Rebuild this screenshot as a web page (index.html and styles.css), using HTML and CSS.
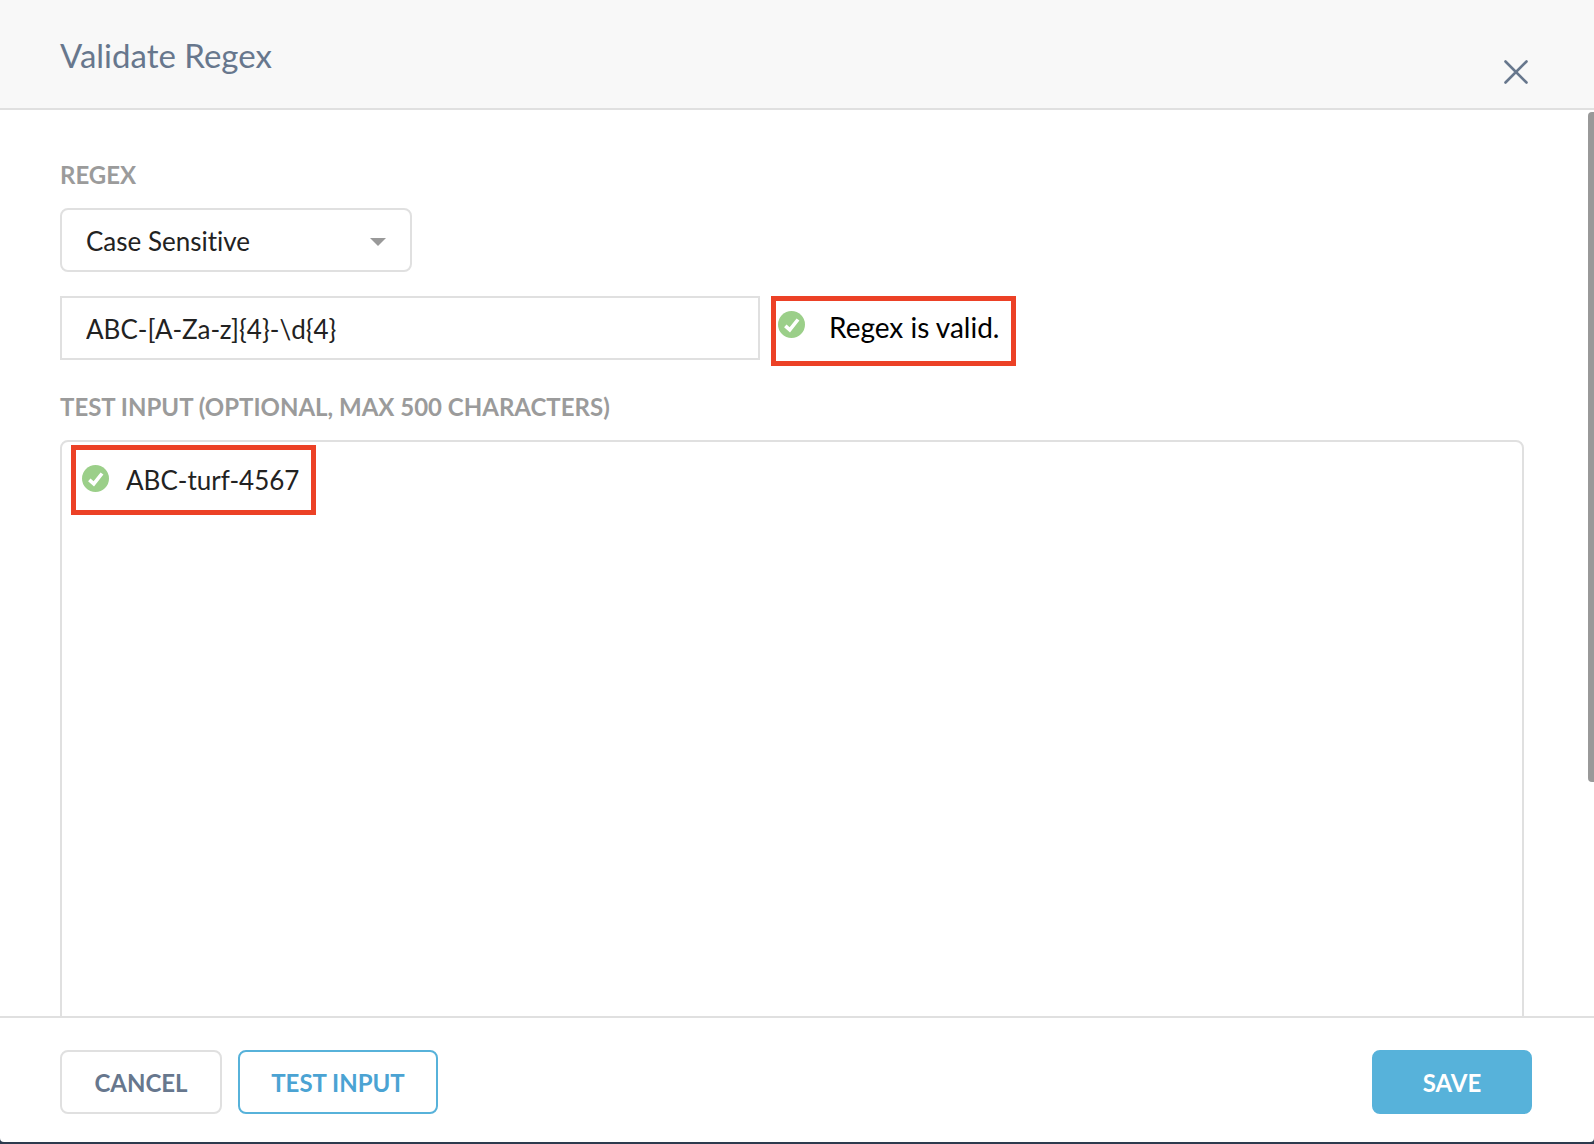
FILE: index.html
```html
<!DOCTYPE html>
<html lang="en">
<head>
<meta charset="utf-8">
<meta name="viewport" content="width=device-width, initial-scale=1">
<title>Validate Regex</title>
<link rel="stylesheet" href="styles.css">
</head>
<body>
<form class="dialog" role="dialog" aria-labelledby="dialog-title">
  <header class="dialog-header">
    <h1 class="dialog-title" id="dialog-title">Validate Regex</h1>
    <button class="close-button" type="button" aria-label="Close">
      <svg class="close-icon" viewBox="0 0 24 24" aria-hidden="true"><path d="M1.5 1.5 22.5 22.5M22.5 1.5 1.5 22.5"/></svg>
    </button>
  </header>

  <main class="dialog-body">
    <div class="scroll-thumb"></div>
    <label class="field-label" for="regex">REGEX</label>
    <div class="select-wrap">
      <select class="control select" aria-label="Case sensitivity">
        <option>Case Sensitive</option>
        <option>Case Insensitive</option>
      </select>
      <svg class="select-arrow" viewBox="0 0 16 8" aria-hidden="true"><path d="M0 0h16L8 8z"/></svg>
    </div>
    <div class="regex-row">
      <input class="control regex-input" id="regex" type="text" value="ABC-[A-Za-z]{4}-\d{4}" spellcheck="false">
      <div class="callout regex-status" role="status">
        <svg class="check-icon" viewBox="0 0 27 27" aria-hidden="true"><circle cx="13.5" cy="13.5" r="13.5"/><path d="M7.3 14.8 11.8 18.9 20 8.5"/></svg>
        <span>Regex is valid.</span>
      </div>
    </div>
    <label class="field-label" for="test-input">TEST INPUT (OPTIONAL, MAX 500 CHARACTERS)</label>
    <div class="test-box">
      <textarea class="test-input" id="test-input" maxlength="500" spellcheck="false">ABC-turf-4567</textarea>
      <div class="callout test-status">
        <svg class="check-icon" viewBox="0 0 27 27" aria-hidden="true"><circle cx="13.5" cy="13.5" r="13.5"/><path d="M7.3 14.8 11.8 18.9 20 8.5"/></svg>
      </div>
    </div>
  </main>

  <footer class="dialog-footer">
    <button class="button button-cancel" type="button">CANCEL</button>
    <button class="button button-outline" type="button">TEST INPUT</button>
    <button class="button button-primary" type="submit">SAVE</button>
  </footer>
</form>
</body>
</html>
```

FILE: styles.css
```css
* {
  box-sizing: border-box;
}

body {
  margin: 0;
  background: #2d3b4e;
  font-family: Lato, "Liberation Sans", sans-serif;
  font-size: 26px;
  font-variant-ligatures: none;
  color: #222;
}

button,
input,
select,
textarea {
  font: inherit;
  font-variant-ligatures: none;
  color: inherit;
}

.dialog {
  display: flex;
  flex-direction: column;
  height: calc(100vh - 2px);
  overflow: hidden;
  background: #fff;
  border-radius: 0 0 4px 4px;
}

.dialog-header {
  display: flex;
  justify-content: space-between;
  flex: none;
  height: 110px;
  padding: 35px 63px 0 60px;
  background: #f8f8f8;
  border-bottom: 2px solid #e0e0e0;
}

.dialog-title {
  margin: 0;
  font-size: 33px;
  line-height: 40px;
  font-weight: 400;
  color: #67778d;
}

.close-button {
  width: 30px;
  height: 73px;
  padding: 0;
  border: 0;
  background: none;
}

.close-icon {
  display: block;
  width: 24px;
  height: 24px;
  margin: 0 auto;
  fill: none;
  stroke: #67778d;
  stroke-width: 2.6;
  stroke-linecap: round;
}

.dialog-body {
  position: relative;
  flex: 1;
  min-height: 0;
  overflow: hidden;
  padding: 49px 70px 0 60px;
}

.scroll-thumb {
  position: absolute;
  top: 2px;
  right: 0;
  width: 6px;
  height: 74%;
  background: #999;
  border-radius: 4px 0 0 4px;
}

.field-label {
  display: block;
  font-size: 24px;
  line-height: 32px;
  font-weight: 700;
  color: #9b9b9b;
}

.control {
  display: block;
  width: 100%;
  height: 64px;
  padding: 2px 24px 0;
  border: 2px solid #e0e0e0;
  background: #fff;
}

.select-wrap {
  position: relative;
  width: 352px;
  margin: 17px 0 24px;
}

.select {
  appearance: none;
  border-radius: 8px;
}

.select-arrow {
  position: absolute;
  top: 30px;
  right: 26px;
  width: 16px;
  height: 8px;
  fill: #999;
  pointer-events: none;
}

.regex-row {
  display: flex;
  align-items: flex-start;
  gap: 11px;
  margin-bottom: 25px;
}

.regex-input {
  width: 700px;
  border-radius: 0;
}

.callout {
  display: flex;
  width: 245px;
  height: 70px;
  border: 5px solid #ec4126;
}

.regex-status {
  gap: 24px;
  padding: 10px 0 0 2px;
  font-size: 28px;
  line-height: 32px;
  color: #000;
  white-space: nowrap;
}

.check-icon {
  flex: none;
  width: 27px;
  height: 27px;
  fill: #9bcf89;
}

.check-icon path {
  fill: none;
  stroke: #fff;
  stroke-width: 3.6;
}

.test-box {
  position: relative;
  margin-top: 17px;
}

.test-input {
  display: block;
  width: 100%;
  height: 720px;
  padding: 22px 24px 22px 64px;
  border: 2px solid #e0e0e0;
  border-radius: 8px;
  line-height: 32px;
  resize: none;
}

.test-status {
  position: absolute;
  top: 5px;
  left: 11px;
  padding: 15px 0 0 6px;
  pointer-events: none;
}

.dialog-footer {
  display: flex;
  flex: none;
  gap: 16px;
  padding: 32px 62px 28px 60px;
  border-top: 2px solid #e0e0e0;
}

.button {
  height: 64px;
  padding: 0;
  border: 2px solid #e0e0e0;
  border-radius: 8px;
  background: #fff;
  font-size: 24px;
  font-weight: 700;
  color: #67778d;
}

.button-cancel {
  width: 162px;
}

.button-outline {
  width: 200px;
  border-color: #57b2da;
  color: #4ba3d3;
}

.button-primary {
  width: 160px;
  margin-left: auto;
  border-color: #57b2da;
  background: #57b2da;
  color: #fff;
}
```
